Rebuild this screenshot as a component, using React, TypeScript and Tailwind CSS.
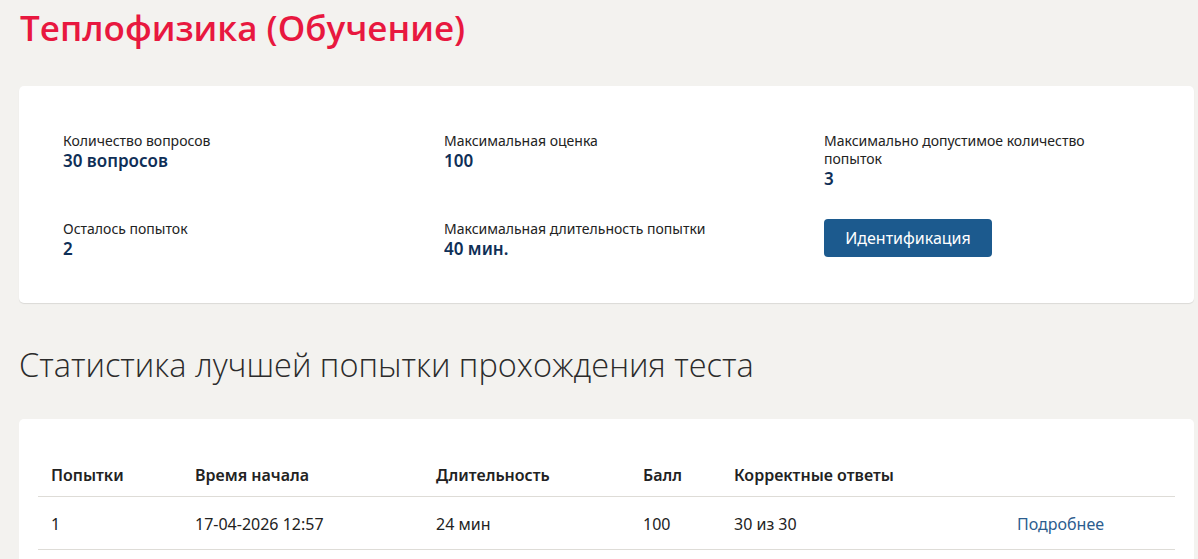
import React from "react";

const body = { fontFamily: '"Noto Sans", "Open Sans", sans-serif' };

function Info({ label, value }: { label: string; value: string }) {
  return (
    <div className="flex flex-col">
      <div className="text-[14px] leading-[18px] text-[#222]">{label}</div>
      <div className="text-[17px] leading-[22px] font-semibold text-[#0f2f57]">{value}</div>
    </div>
  );
}

export default function App() {
  const cols = "grid grid-cols-[144px_241px_207px_91px_283px_1fr]";
  return (
    <div className="min-h-[559px] w-[1198px] bg-[#f3f2ef] pl-[19px] pt-[6px] pb-[40px]" style={body}>
      <h1
        className="ml-[1px] text-[35px] leading-[44px] font-semibold text-[#e8183f]"
        style={{ fontFamily: '"Open Sans", "Noto Sans", sans-serif' }}
      >
        Теплофизика (Обучение)
      </h1>

      <div className="mt-[36px] w-[1175px] rounded-[5px] bg-white shadow-[0_1px_1px_rgba(0,0,0,0.10)] pl-[44px] pt-[46px] pb-[43px]">
        <div className="grid grid-cols-[381px_380px_300px] gap-y-[30px]">
          <Info label="Количество вопросов" value="30 вопросов" />
          <Info label="Максимальная оценка" value="100" />
          <Info label="Максимально допустимое количество попыток" value="3" />
          <Info label="Осталось попыток" value="2" />
          <Info label="Максимальная длительность попытки" value="40 мин." />
          <div className="-mt-[1px]">
            <button className="h-[38px] w-[168px] rounded-[4px] bg-[#1c5a8e] text-[16px] text-white">
              Идентификация
            </button>
          </div>
        </div>
      </div>

      <h2
        className="mt-[42px] text-[32.5px] leading-[40px] font-light text-[#2b2b2b]"
        style={{ fontFamily: '"Open Sans", "Noto Sans", sans-serif' }}
      >
        Статистика лучшей попытки прохождения теста
      </h2>

      <div className="mt-[34px] w-[1175px] rounded-[5px] bg-white px-[19px] pt-[44px] pb-[20px]">
        <div className={`${cols} leading-[24px] pb-[9px] border-b border-[#dedcd7] pl-[13px] text-[16px] font-semibold text-[#222]`}>
          <div>Попытки</div>
          <div>Время начала</div>
          <div>Длительность</div>
          <div>Балл</div>
          <div>Корректные ответы</div>
          <div></div>
        </div>
        <div className={`${cols} leading-[24px] pt-[15px] pb-[13px] border-b border-[#dedcd7] pl-[13px] text-[16px] text-[#222]`}>
          <div>1</div>
          <div>17-04-2026 12:57</div>
          <div>24 мин</div>
          <div>100</div>
          <div>30 из 30</div>
          <div className="text-[#2c5d8f]">Подробнее</div>
        </div>
      </div>
    </div>
  );
}
